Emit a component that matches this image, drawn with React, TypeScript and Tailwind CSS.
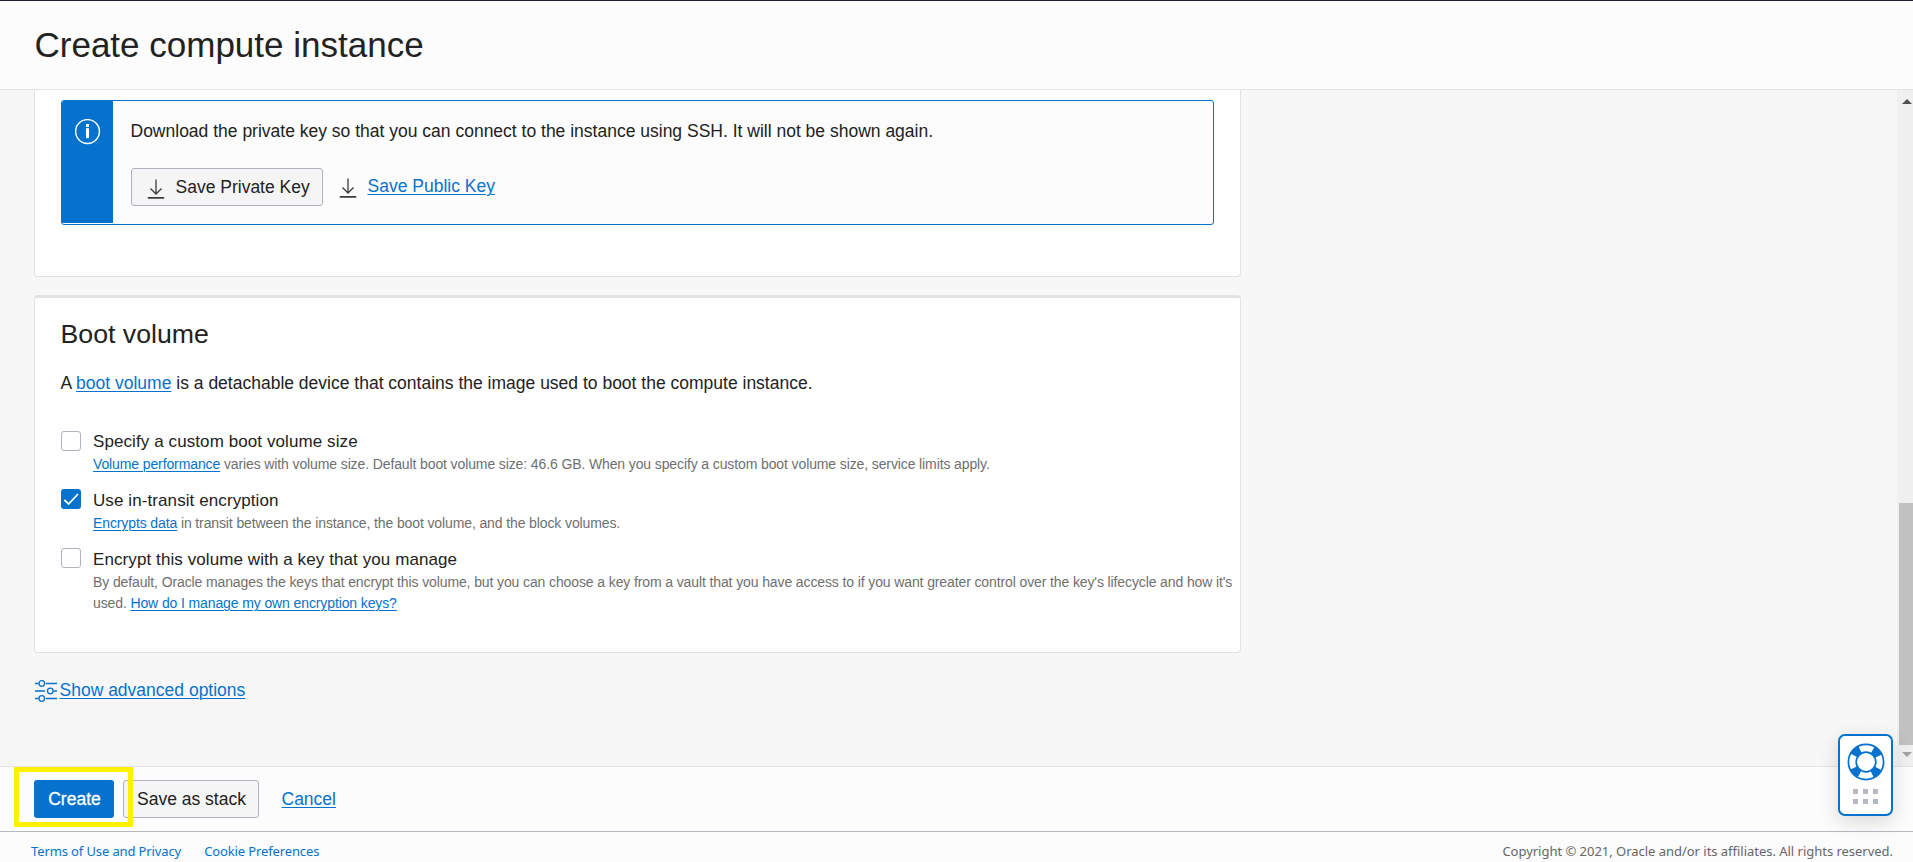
import type { ReactNode } from 'react';

function Link({ children }: { children: ReactNode }) {
  return (
    <a href="#" className="text-[#0572ce] underline decoration-1 underline-offset-2">
      {children}
    </a>
  );
}

function DownloadIcon() {
  return (
    <svg width="18" height="20" viewBox="0 0 18 20" fill="none" stroke="#3c3c3c" className="block shrink-0">
      <path d="M9 0.5V15M3.5 9.5L9 15L14.5 9.5" strokeWidth="1.3" />
      <path d="M0.8 18.9H17.2" strokeWidth="1.6" />
    </svg>
  );
}

function InfoIcon() {
  return (
    <svg width="26" height="26" viewBox="0 0 26 26" fill="none" className="block">
      <circle cx="12.5" cy="12.5" r="11.9" stroke="#fff" strokeWidth="1.5" />
      <rect x="11" y="5" width="3" height="3" fill="#fff" />
      <rect x="11" y="9.2" width="3" height="10" fill="#fff" />
    </svg>
  );
}

function SlidersIcon() {
  return (
    <svg width="22" height="22" viewBox="0 0 22 22" fill="none" stroke="#0572ce" strokeWidth="1.3" className="block shrink-0">
      <path d="M0 3.5H3.7M10.8 3.5H22M0 11H10M18.5 11H22M0 18.5H3.7M10.8 18.5H22" />
      <circle cx="6.8" cy="3.5" r="2.8" />
      <circle cx="15.3" cy="11" r="2.8" />
      <circle cx="6.8" cy="18.5" r="2.8" />
    </svg>
  );
}

function LifebuoyIcon() {
  return (
    <svg width="38" height="38" viewBox="0 0 38 38" fill="none" className="block">
      <circle cx="19" cy="19" r="14" stroke="#0572ce" strokeWidth="8.5" strokeDasharray="8.6 13.39" strokeDashoffset="-6.7" />
      <circle cx="19" cy="19" r="17.6" stroke="#0572ce" strokeWidth="1.7" />
      <circle cx="19" cy="19" r="9.8" stroke="#0572ce" strokeWidth="1.7" />
    </svg>
  );
}

function Option({ label, checked = false, first = false, children }: { label: string; checked?: boolean; first?: boolean; children: ReactNode }) {
  return (
    <div className="flex items-start gap-3">
      <span className={first ? 'pt-px' : 'pt-0'}>
        {checked ? (
          <span className="block h-5 w-5 rounded-[3px] bg-[#0572ce]">
            <svg width="20" height="20" viewBox="0 0 20 20" fill="none" stroke="#fff" strokeWidth="1.8">
              <path d="M3.3 10.8L7.6 15L17 5" />
            </svg>
          </span>
        ) : (
          <span className="block h-5 w-5 rounded-[3px] border border-[#aeb3bd] bg-white" />
        )}
      </span>
      <div className="whitespace-nowrap">
        <div className="h-6 text-[17px] leading-[23px] tracking-[0.09px]">{label}</div>
        <div className="text-[14px] leading-[21px] tracking-[-0.115px] text-[#6f6f6f]">{children}</div>
      </div>
    </div>
  );
}

export default function App() {
  return (
    <div className="relative flex h-[862px] w-[1913px] flex-col overflow-hidden border-t border-[#1a1f2b] bg-[#fcfcfc] font-['Liberation_Sans',Arial,sans-serif] text-[17.5px] text-[#222]">
      <header className="h-[89px] shrink-0 border-b border-[#e3e4e6] pt-[22px] pl-[34.5px]">
        <h1 className="text-[35px] leading-[44px]">Create compute instance</h1>
      </header>

      <div className="flex h-[676px] shrink-0 bg-[#f7f7f7]">
        <main className="flex-1 pl-[34px]">
          <section className="h-[187px] w-[1207px] rounded-b-[4px] border border-t-0 border-[#e1e2e5] bg-white px-[26px] pt-[10px]">
            <div className="flex h-[125px] w-[1153px] overflow-hidden rounded-[3px] border border-[#0572ce] bg-[#fcfcfc]">
              <div className="h-[122px] w-[51px] shrink-0 bg-[#0572ce] pt-[18px] pl-[13px]">
                <InfoIcon />
              </div>
              <div className="pt-[18px] pl-[17.5px] whitespace-nowrap">
                <p className="leading-6">Download the private key so that you can connect to the instance using SSH. It will not be shown again.</p>
                <div className="mt-[25px] flex gap-4">
                  <button className="flex h-[38px] w-[192px] items-center gap-[11px] rounded-[3px] border border-[#aeb3bd] bg-[#f5f5f5] pl-[15px]">
                    <span className="pt-[3px]"><DownloadIcon /></span>
                    <span>Save Private Key</span>
                  </button>
                  <div className="flex items-start gap-[11px]">
                    <span className="pt-[10px]"><DownloadIcon /></span>
                    <span className="pt-[6px] leading-6"><Link>Save Public Key</Link></span>
                  </div>
                </div>
              </div>
            </div>
          </section>

          <section className="mt-[18px] h-[358px] w-[1207px] rounded-[4px] border border-t-[3px] border-[#e1e2e5] bg-white pl-[26px] whitespace-nowrap">
            <h2 className="-ml-[0.5px] pt-[20px] text-[26.7px] leading-8">Boot volume</h2>
            <p className="mt-[21px] -ml-[0.5px] leading-6">
              A <Link>boot volume</Link> is a detachable device that contains the image used to boot the compute instance.
            </p>
            <div className="mt-[35px] grid auto-rows-[59px]">
              <Option label="Specify a custom boot volume size" first>
                <Link>Volume performance</Link> varies with volume size. Default boot volume size: 46.6 GB. When you specify a custom boot volume size, service limits apply.
              </Option>
              <Option label="Use in-transit encryption" checked>
                <Link>Encrypts data</Link> in transit between the instance, the boot volume, and the block volumes.
              </Option>
              <Option label="Encrypt this volume with a key that you manage">
                By default, Oracle manages the keys that encrypt this volume, but you can choose a key from a vault that you have access to if you want greater control over the key's lifecycle and how it's
                <br />
                used. <Link>How do I manage my own encryption keys?</Link>
              </Option>
            </div>
          </section>

          <div className="mt-[25px] flex items-start gap-[2.5px] pl-[1px]">
            <span className="pt-[2px]"><SlidersIcon /></span>
            <span className="leading-6"><Link>Show advanced options</Link></span>
          </div>
        </main>

        <div className="flex w-4 flex-col items-end bg-[#f0f0f0]">
          <svg width="16" height="16" viewBox="0 0 16 16" className="mt-[3px] block shrink-0">
            <path d="M5 11L10 6L15 11Z" fill="#505050" />
          </svg>
          <div className="mt-[394px] h-[242px] w-[14px] shrink-0 bg-[#c1c1c1]" />
          <svg width="16" height="16" viewBox="0 0 16 16" className="mt-px block shrink-0">
            <path d="M5 6L10 11L15 6Z" fill="#a3a3a3" />
          </svg>
        </div>
      </div>

      <div className="flex h-[66px] shrink-0 items-start border-t border-b border-t-[#e3e4e6] border-b-[#b5bac2] pt-[13px] pl-[34px] whitespace-nowrap">
        <button className="h-[38px] w-[80px] rounded-[3px] bg-[#0572ce] pl-px leading-[38px] text-white [-webkit-text-stroke:0.3px_white]">Create</button>
        <button className="ml-[9px] h-[38px] w-[136px] rounded-[3px] border border-[#aeb3bd] bg-[#f5f5f5] pl-px leading-[36px]">Save as stack</button>
        <span className="ml-[22.5px] leading-[38px]"><Link>Cancel</Link></span>
      </div>

      <footer className="flex h-[30px] shrink-0 items-start justify-between pt-[8px] pr-[20px] pl-[31px] font-['Noto_Sans','Open_Sans',sans-serif] text-[13px] leading-[22px] whitespace-nowrap text-[#666]">
        <div className="flex gap-[23px] tracking-[-0.12px] text-[#0572ce]">
          <a href="#">Terms of Use and Privacy</a>
          <a href="#">Cookie Preferences</a>
        </div>
        <span className="tracking-[-0.025px]">Copyright © 2021, Oracle and/or its affiliates. All rights reserved.</span>
      </footer>

      <div className="absolute top-[766px] left-[14px] h-[60px] w-[119px] border-[5px] border-[#fff200]" />

      <div className="absolute top-[733px] left-[1838px] flex h-[82px] w-[55px] flex-col items-center rounded-[7px] border-2 border-[#0572ce] bg-white pt-[7px] shadow-[0_6px_20px_rgba(0,0,0,0.14)]">
        <LifebuoyIcon />
        <div className="mt-2 grid grid-cols-3 gap-[5px]">
          {[0, 1, 2, 3, 4, 5].map((dot) => (
            <span key={dot} className="h-[5px] w-[5px] bg-[#b5bac2]" />
          ))}
        </div>
      </div>
    </div>
  );
}
